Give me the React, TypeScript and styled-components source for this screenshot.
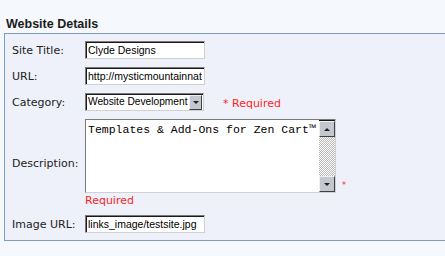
import React from "react";
import styled, { createGlobalStyle } from "styled-components";

const GlobalStyle = createGlobalStyle`
    html, body {
        margin: 0;
        padding: 0;
        background: #f5f8fc;
        overflow: hidden;
    }
`

const Page = styled.div`
    width: 445px;
    height: 256px;
`

const Heading = styled.div`
    padding: 17px 0 0 6px;
    margin-bottom: 1px;
    font-family: "Liberation Sans", Arial, sans-serif;
    font-weight: 700;
    font-size: 12.5px;
    line-height: 15px;
    color: #1c1c1c;
`

const Box = styled.div`
    margin-left: 4px;
    border: 1px solid #7f9db9;
    border-right: none;
    background: #eef1f9;
    padding: 7px 0 7px 7px;
`

const FormGrid = styled.div`
    display: grid;
    grid-template-columns: 73px auto;
    row-gap: 8px;
    align-items: center;
    justify-items: start;
`

const Label = styled.div`
    font-family: "DejaVu Sans", Verdana, sans-serif;
    font-size: 11px;
    line-height: 13px;
    color: #222;
    padding-top: 1px;
`

const FieldRow = styled.div`
    display: flex;
    align-items: center;
`

const FieldCol = styled.div`
    display: flex;
    flex-direction: column;
`

const Inset = styled.div<{ $w: number; $h: number }>`
    box-sizing: border-box;
    width: ${p => p.$w}px;
    height: ${p => p.$h}px;
    background: #fff;
    border-top: 1px solid #7a7a7a;
    border-left: 1px solid #7a7a7a;
    border-right: 1px solid #d0d0d0;
    border-bottom: 1px solid #d0d0d0;
    box-shadow: inset 1px 1px 0 #1a1a1a;
    display: flex;
    overflow: hidden;
`

const InputText = styled.div`
    font-family: "Liberation Sans", Arial, sans-serif;
    font-size: 10.5px;
    line-height: 16px;
    color: #000;
    padding-left: 2px;
    white-space: nowrap;
    overflow: hidden;
`

const SelectText = styled(InputText)`
    flex: 1;
    font-size: 10.2px;
    padding-left: 2px;
`

const RaisedButton = styled.div<{ $w: number; $h: number }>`
    box-sizing: border-box;
    width: ${p => p.$w}px;
    height: ${p => p.$h}px;
    background: #c4c6d0;
    border-top: 1px solid #f0f0f0;
    border-left: 1px solid #f0f0f0;
    border-right: 1px solid #404040;
    border-bottom: 1px solid #404040;
    display: flex;
    align-items: center;
    justify-content: center;
    flex-shrink: 0;
`

const SelectButton = styled(RaisedButton)`
    margin: 1px 1px 0 0;
`

const Arrow = styled.div<{ $up?: boolean }>`
    width: 0;
    height: 0;
    border-left: 3px solid transparent;
    border-right: 3px solid transparent;
    ${p => p.$up ? "border-bottom: 3px solid #222;" : "border-top: 3px solid #222;"}
`

const Required = styled.div`
    font-family: "DejaVu Sans", Verdana, sans-serif;
    font-size: 11px;
    line-height: 13px;
    color: #ff1e1e;
`

const RequiredInline = styled(Required)`
    margin-left: 19px;
    padding-top: 2px;
`

const RequiredBelow = styled(Required)`
    margin-top: 2px;
    line-height: 12px;
`

const TextArea = styled.textarea`
    flex: 1;
    border: none;
    outline: none;
    resize: none;
    overflow: hidden;
    background: #fff;
    margin: 0;
    padding: 3px 0 0 2px;
    font-family: "Liberation Mono", "Courier New", monospace;
    font-size: 11.5px;
    line-height: 13px;
    color: #000;
`

const ScrollBar = styled.div`
    width: 16px;
    display: flex;
    flex-direction: column;
    margin: 1px 0 0 0;
`

const Track = styled.div`
    flex: 1;
    background-color: #ffffff;
    background-image: repeating-conic-gradient(#b8b8b8 0 25%, #ffffff 0 50%);
    background-size: 2px 2px;
`

const SmallStar = styled.span`
    font-family: "DejaVu Sans", Verdana, sans-serif;
    font-size: 8px;
    color: #ff1e1e;
    align-self: flex-end;
    margin: 0 0 3px 6px;
`

const App: React.FC = () => {
    return (
        <Page>
            <GlobalStyle />
            <Heading>Website Details</Heading>
            <Box>
                <FormGrid>
                    <Label>Site Title:</Label>
                    <Inset $w={120} $h={18}>
                        <InputText>Clyde Designs</InputText>
                    </Inset>

                    <Label>URL:</Label>
                    <Inset $w={120} $h={18}>
                        <InputText>http://mysticmountainnat</InputText>
                    </Inset>

                    <Label>Category:</Label>
                    <FieldRow>
                        <Inset $w={119} $h={18}>
                            <SelectText>Website Development</SelectText>
                            <SelectButton $w={13} $h={15}>
                                <Arrow />
                            </SelectButton>
                        </Inset>
                        <RequiredInline>* Required</RequiredInline>
                    </FieldRow>

                    <Label>Description:</Label>
                    <FieldCol>
                        <FieldRow>
                            <Inset $w={251} $h={74}>
                                <TextArea defaultValue="Templates & Add-Ons for Zen Cart™" />
                                <ScrollBar>
                                    <RaisedButton $w={16} $h={16}>
                                        <Arrow $up />
                                    </RaisedButton>
                                    <Track />
                                    <RaisedButton $w={16} $h={16}>
                                        <Arrow />
                                    </RaisedButton>
                                </ScrollBar>
                            </Inset>
                            <SmallStar>*</SmallStar>
                        </FieldRow>
                        <RequiredBelow>Required</RequiredBelow>
                    </FieldCol>

                    <Label>Image URL:</Label>
                    <Inset $w={120} $h={18}>
                        <InputText>links_image/testsite.jpg</InputText>
                    </Inset>
                </FormGrid>
            </Box>
        </Page>
    )
}

export default App
